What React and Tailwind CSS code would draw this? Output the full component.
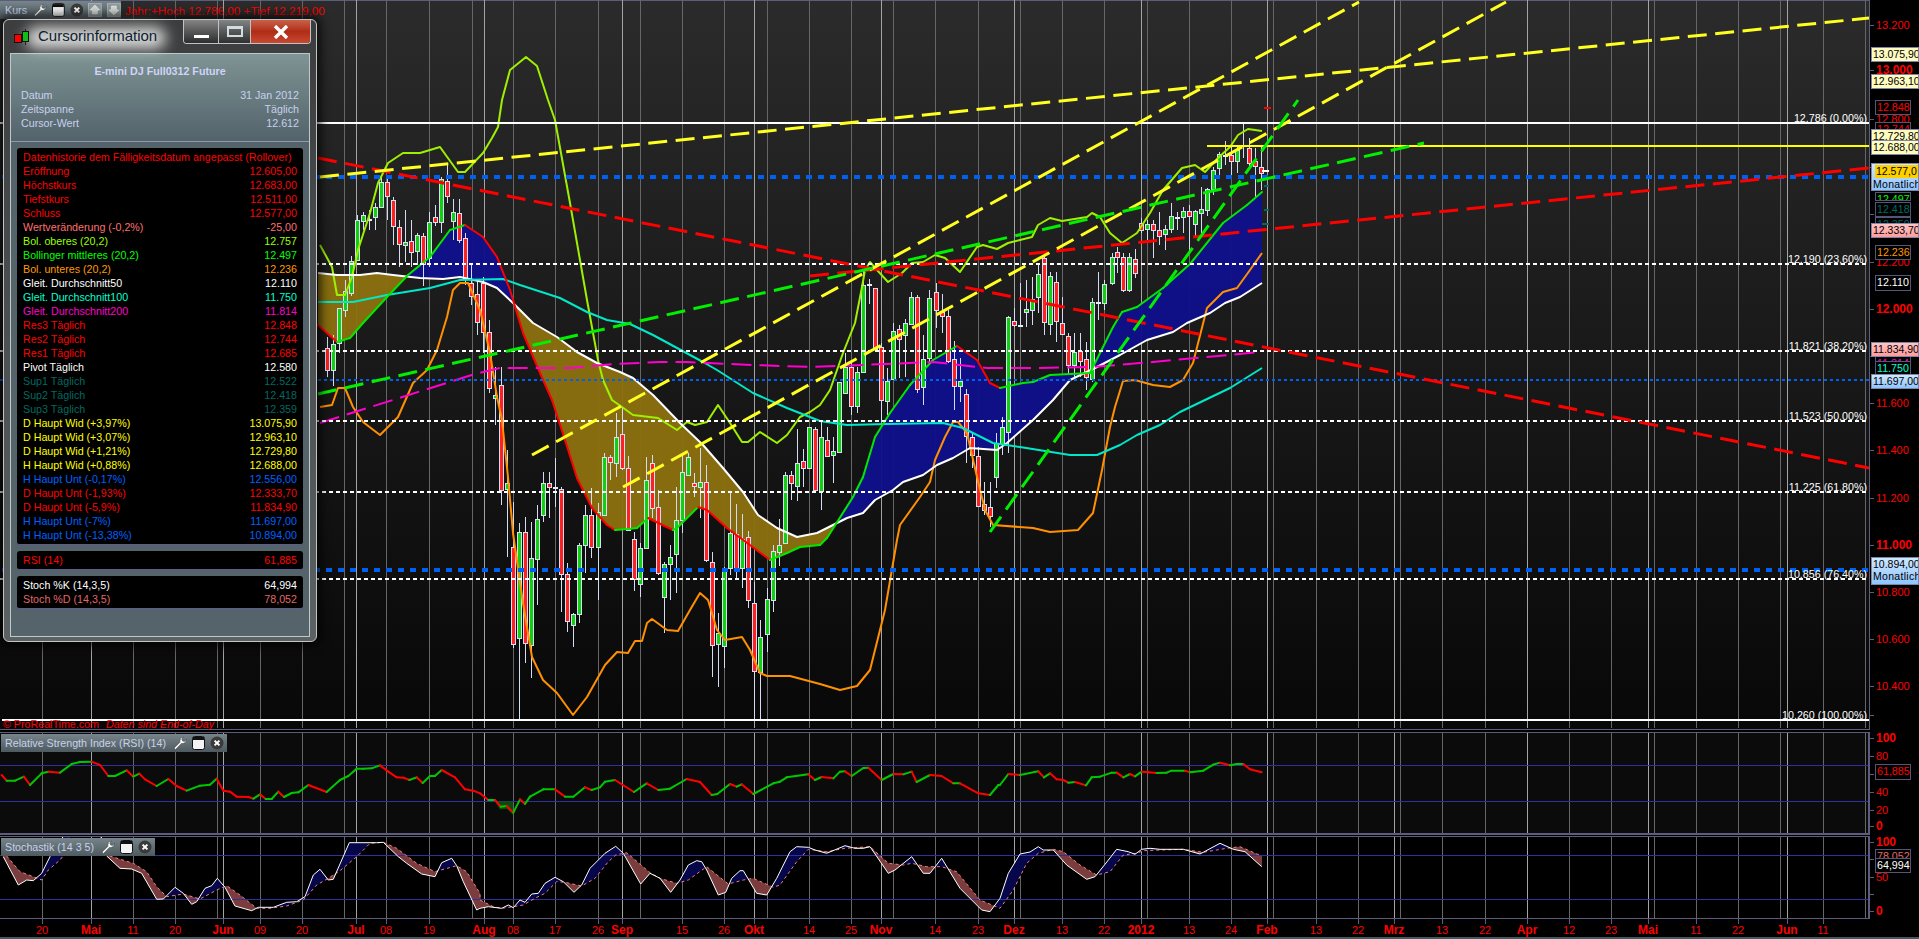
import React from "react";

const z = (x0, y0, a) => a.map(([x, y]) => [x0 + x / 3, y0 + y / 3]);
const pts = (p) => p.map(([x, y]) => `${x.toFixed(1)},${y.toFixed(1)}`).join(" ");
const at = (p, x) => {
  if (x <= p[0][0]) return p[0][1];
  for (let i = 1; i < p.length; i++) {
    if (x <= p[i][0]) {
      const [a, b] = p[i - 1];
      const [c, d] = p[i];
      return c === a ? d : b + ((d - b) * (x - a)) / (c - a);
    }
  }
  return p[p.length - 1][1];
};
const band = (a, b, x0, x1, above, below) => {
  const out = [];
  let cur = null;
  for (let x = x0; x <= x1; x++) {
    const ya = at(a, x);
    const yb = at(b, x);
    const c = ya < yb ? above : below;
    if (!cur || cur.c !== c) {
      if (cur) out.push(cur);
      cur = { c, t: [], u: [] };
    }
    cur.t.push([x, ya]);
    cur.u.push([x, yb]);
  }
  if (cur) out.push(cur);
  return out.map((r) => ({ c: r.c, p: pts([...r.t, ...r.u.reverse()]) }));
};

const GRID = [42,91,133,175,217,223,260,302,344,356,386,429,472,484,513,555,598,622,640,682,724,754,767,809,851,881,893,935,978,1014,1020,1062,1104,1141,1147,1189,1231,1267,1273,1316,1358,1394,1400,1442,1485,1527,1569,1611,1648,1654,1696,1738,1780,1787,1823,1865];
const MONTH = new Set([91,223,356,484,622,754,881,1014,1141,1267,1394,1527,1648,1787]);
const DATES = [[42,"20"],[91,"Mai",1],[133,"11"],[175,"20"],[223,"Jun",1],[260,"09"],[302,"20"],[356,"Jul",1],[386,"08"],[429,"19"],[484,"Aug",1],[513,"08"],[555,"17"],[598,"26"],[622,"Sep",1],[682,"15"],[724,"26"],[754,"Okt",1],[809,"14"],[851,"25"],[881,"Nov",1],[935,"14"],[978,"23"],[1014,"Dez",1],[1062,"13"],[1104,"22"],[1141,"2012",1],[1189,"13"],[1231,"24"],[1267,"Feb",1],[1316,"13"],[1358,"22"],[1394,"Mrz",1],[1442,"13"],[1485,"22"],[1527,"Apr",1],[1569,"12"],[1611,"23"],[1648,"Mai",1],[1696,"11"],[1738,"22"],[1787,"Jun",1],[1823,"11"]];

const BBU = [[320,245],[332,267],[337,295],[345,295],[352,277],[358,250],[370,213],[378,183],[388,163],[403,153],[420,153],[440,147],[458,172],[465,172],[483,153],[492,138],[498,127],[502,100],[510,70],[526,57],[537,66],[548,100],[555,120],[570,203],[587,300],[598,360],[603,380],[612,400],[622,407],[633,415],[658,418],[677,430],[687,422],[695,425],[707,422],[718,405],[730,423],[742,442],[748,442],[760,432],[777,443],[787,435],[800,417],[810,412],[820,405],[830,390],[843,353],[855,323],[862,287],[865,270],[870,262],[877,270],[888,282],[902,273],[912,263],[923,262],[935,255],[945,258],[960,272],[977,247],[983,245],[997,249],[1008,243],[1032,237],[1038,225],[1050,218],[1062,221],[1087,217],[1092,213],[1100,217],[1110,233],[1122,243],[1137,233],[1150,213],[1163,190],[1182,168],[1195,165],[1205,172],[1218,158],[1230,147],[1238,135],[1248,129],[1262,131]];
const MID = [[318,325],[337,342],[350,338],[363,323],[387,297],[408,275],[430,257],[450,230],[465,225],[483,237],[497,257],[510,290],[523,333],[540,373],[552,400],[565,440],[577,478],[592,508],[607,525],[615,530],[628,529],[637,528],[648,518],[673,530],[677,528],[698,507],[707,510],[727,528],[770,560],[787,553],[800,547],[820,545],[827,538],[853,497],[863,477],[875,437],[890,413],[910,385],[933,360],[957,346],[977,360],[990,383],[1000,388],[1023,383],[1033,382],[1050,375],[1090,373],[1113,327],[1122,312],[1137,307],[1163,288],[1190,264],[1223,223],[1247,205],[1262,192]];
const BBL = [[320,407],[332,405],[338,388],[345,388],[353,407],[363,422],[380,435],[398,417],[413,383],[427,370],[437,350],[447,317],[453,290],[460,283],[468,283],[480,310],[490,353],[497,397],[502,420],[508,477],[513,533],[523,603],[532,657],[543,680],[557,693],[573,715],[587,697],[605,665],[617,652],[628,653],[635,641],[642,641],[647,623],[652,619],[667,630],[678,631],[690,610],[700,593],[708,600],[717,630],[725,640],[742,637],[750,650],[760,673],[767,676],[790,676],[820,684],[840,690],[857,686],[870,670],[885,610],[897,540],[900,525],[920,497],[930,482],[935,460],[945,437],[953,422],[958,422],[967,433],[977,477],[985,510],[993,525],[1033,528],[1050,532],[1078,530],[1093,513],[1102,470],[1110,427],[1115,407],[1123,381],[1135,380],[1153,385],[1170,387],[1183,380],[1193,363],[1207,308],[1223,292],[1237,288],[1250,270],[1262,253]];
const SMA50 = [[318,273],[337,275],[360,275],[377,273],[393,275],[420,278],[443,279],[460,277],[483,282],[497,288],[513,303],[533,323],[557,337],[577,352],[597,363],[620,372],[633,378],[653,395],[680,423],[703,445],[723,468],[743,492],[758,515],[777,528],[797,537],[817,533],[847,518],[863,513],[875,500],[893,490],[903,482],[923,475],[937,465],[953,458],[970,448],[997,450],[1007,443],[1033,420],[1053,400],[1070,380],[1097,367],[1120,355],[1147,340],[1173,332],[1187,323],[1210,313],[1225,303],[1240,297],[1262,283]];
const SMA100 = [[318,302],[353,302],[387,295],[430,288],[460,280],[503,279],[520,285],[560,298],[587,312],[607,320],[630,324],[653,335],[703,362],[717,370],[753,393],[787,408],[820,421],[847,425],[887,424],[943,423],[963,428],[993,443],[1020,447],[1070,455],[1097,455],[1120,445],[1137,435],[1160,425],[1180,412],[1230,388],[1262,368]];
const SMA200 = [[320,423],[475,374],[500,368],[570,368],[615,364],[660,362],[687,362],[753,365],[812,367],[933,362],[987,368],[1033,368],[1093,367],[1153,362],[1260,352]];

const R = "r", G = "g", W = "w";
const candles = [
  ...[[20,683,750,650,770,R],[38,672,750,645,797,G],[56,565,670,565,700,G],[74,512,570,480,590,G],[92,422,518,408,528,G],[110,300,420,285,420,G],[128,285,302,275,330,G],[146,298,300,270,330,W],[164,262,292,250,330,G],[182,185,260,165,265,G],[200,187,230,165,300,R],[218,241,320,230,375,R],[236,322,373,300,440,R],[254,365,373,270,425,G],[272,362,395,300,440,R],[290,345,392,340,435,G],[308,347,430,340,498,R],[328,307,415,275,440,G],[346,292,307,255,318,R],[364,178,307,170,340,G],[382,182,227,135,250,R],[400,277,305,238,360,G],[418,278,360,237,368,R],[436,355,478,340,495,R],[454,490,530,430,555,R],[472,522,605,480,645,R],[490,490,638,470,700,R],[508,637,805,600,820,R],[526,825,835,740,915,G],[544,795,1110,740,1155,R]].map(([x,t,b,u,d,c])=>[320+x/3,120+t/3,120+b/3,120+u/3,120+d/3,c]),
  ...[[562,250,268,150,470,G],[580,440,730,305,745,R],[598,397,715,370,957,G],[616,397,730,350,790,R],[634,475,735,365,835,G],[652,358,478,315,615,G],[670,250,345,215,365,G],[688,250,262,215,355,R],[706,262,266,175,320,W],[724,268,522,262,635,R],[742,523,665,490,695,R],[760,643,675,640,740,G],[778,435,643,430,670,G],[796,346,436,315,520,G],[814,346,442,265,475,R],[835,337,442,310,600,G],[853,170,345,160,345,G],[871,172,187,165,240,R],[889,110,187,40,230,G],[907,103,205,20,210,R],[925,203,388,168,392,R],[943,416,535,395,572,R],[961,445,553,430,592,G],[979,241,445,170,448,G],[997,190,325,165,355,R],[1015,322,520,270,525,R],[1033,492,592,485,700,G],[1051,470,492,435,600,G],[1069,360,463,262,578,G],[1087,217,360,160,398,G],[1105,170,225,160,228,G],[1123,250,256,220,290,R],[1141,247,262,145,355,G],[1159,245,478,195,485,R],[1177,485,733,455,830,R],[1195,700,733,640,862,G],[1213,510,738,500,803,G],[1231,400,505,275,525,G],[1249,402,503,312,540,R],[1267,417,505,342,565,G],[1285,410,598,392,625,R],[1303,610,815,545,957,R],[1321,710,815,660,957,G],[1342,598,702,565,755,G],[1360,452,600,435,635,G],[1378,435,455,358,498,G],[1396,224,427,217,428,G],[1414,226,250,212,300,R],[1432,190,258,88,302,G],[1450,184,205,148,262,R],[1468,82,205,80,205,G],[1486,88,270,80,278,R]].map(([x,t,b,u,d,c])=>[320+x/3,400+t/3,400+b/3,400+u/3,400+d/3,c]),
  ...[[4,652,815,600,870,G],[22,660,708,620,712,R],[40,694,706,650,790,G],[58,487,697,485,700,G],[76,440,517,400,520,G],[94,440,556,430,585,R],[112,455,556,440,578,G],[130,195,455,150,460,G],[148,192,196,178,252,W],[166,203,385,203,390,R],[184,380,540,370,605,R],[202,482,543,445,585,G],[220,332,475,310,480,G],[238,328,357,315,475,R],[256,310,345,298,470,G],[274,230,310,215,315,G],[292,230,505,225,520,R],[310,418,502,345,555,G],[328,235,415,210,425,G],[349,217,270,190,325,R],[367,275,288,222,340,R],[385,287,423,270,430,R],[403,418,498,362,570,R],[421,482,496,415,545,G],[439,523,650,508,728,R],[457,650,705,640,745,R],[475,707,858,680,860,R],[493,852,870,785,885,R],[511,862,890,785,920,R],[529,670,772,640,805,G],[547,622,672,590,705,G],[565,290,636,288,700,G],[583,302,313,265,320,R],[601,314,317,190,320,W],[619,268,276,180,320,G],[637,237,270,170,315,G],[655,163,233,135,280,G],[673,115,307,112,345,R],[691,167,312,155,345,G],[709,187,305,155,365,R],[727,308,340,230,345,R],[745,347,435,340,465,R],[763,395,435,340,470,G],[781,394,423,340,470,R],[799,416,470,365,510,R],[817,245,475,235,485,G],[835,247,250,155,300,W],[853,193,250,180,270,G]].map(([x,t,b,u,d,c])=>[820+x/3,220+t/3,220+b/3,220+u/3,220+d/3,c]),
  ...[[455,502,580,490,585,G],[472,487,502,470,550,R],[490,502,600,490,605,R],[508,502,600,490,605,G],[526,508,550,477,565,R],[544,398,418,385,430,R],[562,402,418,390,450,G],[580,403,422,390,505,R],[598,421,440,365,465,R],[616,418,433,405,480,G],[634,378,418,340,430,G],[652,380,382,365,420,W],[670,364,382,350,430,G],[688,364,380,345,490,R],[706,364,403,360,445,G],[724,358,371,290,430,G],[742,298,362,295,378,G],[760,240,298,232,315,G],[778,193,235,185,255,G],[796,196,200,153,225,W],[814,196,215,165,255,R],[832,180,212,165,250,G],[850,165,172,100,205,W],[868,175,220,145,235,R],[886,212,228,175,320,R],[904,230,247,170,300,R]].map(([x,t,b,u,d,c])=>[960+x/3,90+t/3,90+b/3,90+u/3,90+d/3,c]),
];

const RSI = [
  ...z(0,700,[[5,225],[20,242],[45,242],[72,230],[90,255],[125,220],[145,215],[180,218],[215,192],[240,186],[275,185],[300,195],[325,228],[345,228],[380,211],[400,230],[418,221],[435,238],[470,258],[505,237],[530,258],[560,272],[600,257],[630,254],[650,236],[670,272],[690,275],[710,290],[745,291],[760,296],[780,283],[797,297],[815,297],[835,275],[852,291],[875,279],[895,277],[925,255],[980,276],[1020,240],[1045,228],[1070,206],[1090,206],[1115,205],[1140,196],[1165,215],[1190,232],[1210,233],[1228,240],[1250,232],[1268,249],[1290,228],[1305,228],[1325,210],[1365,232],[1395,268],[1420,272]]),
  ...z(480,730,[[0,190],[25,210],[45,210],[62,230],[80,228],[100,248],[120,208],[135,222],[150,200],[190,178],[225,178],[255,200],[280,200],[315,172],[335,180],[360,172],[375,155],[405,150],[462,186],[500,160],[535,180],[570,176],[620,147],[660,156],[695,195],[712,192],[750,162],[770,170],[785,163],[820,192],[880,160],[900,155],[920,142],[985,133],[1005,150],[1025,141],[1060,145],[1080,125],[1095,124],[1115,138],[1150,114],[1165,113],[1205,150],[1240,132],[1270,133],[1295,125],[1310,156],[1350,135],[1385,138],[1420,160],[1440,160],[1495,190],[1530,195],[1555,165]]),
  ...z(1000,730,[[0,165],[25,132],[60,135],[115,124],[132,142],[150,130],[170,148],[190,150],[205,158],[225,156],[258,166],[275,142],[300,140],[335,128],[350,128],[370,142],[390,132],[405,139],[425,125],[445,127],[470,129],[500,128],[515,122],[555,122],[570,127],[610,122],[640,104],[660,98],[690,106],[710,102],[730,102],[750,118],[785,127]]),
];
const K = [
  ...z(0,700,[[10,470],[55,555],[80,540],[100,542],[125,520],[150,470],[165,435],[200,400],[300,400],[320,468],[360,505],[395,507],[425,520],[470,598],[490,597],[525,562],[550,580],[575,613],[590,605],[615,565],[635,557],[652,535],[675,562],[705,618],[755,632],[775,622],[820,622],[860,607],[890,605],[915,590],[940,525],[960,508],[985,540],[1000,538],[1048,428],[1130,428],[1150,427],[1195,470],[1220,490],[1265,522],[1305,530],[1325,488],[1355,475],[1370,497],[1390,545],[1430,630]]),
  ...z(480,730,[[0,535],[25,530],[65,535],[85,525],[100,533],[120,510],[135,517],[155,492],[175,490],[195,460],[225,442],[250,455],[282,487],[305,465],[330,415],[375,370],[407,349],[430,370],[482,462],[510,430],[540,445],[572,487],[600,450],[625,405],[650,392],[665,395],[680,420],[715,495],[737,487],[755,445],[780,422],[790,422],[830,490],[860,495],[890,445],[930,365],[950,350],[985,352],[1005,360],[1040,370],[1095,347],[1125,355],[1150,355],[1170,350],[1225,430],[1245,420],[1295,380],[1330,430],[1350,430],[1385,385],[1440,475],[1505,540],[1530,545],[1560,505]]),
  ...z(1000,730,[[25,430],[60,372],[90,366],[115,350],[130,360],[160,360],[200,405],[260,448],[285,440],[315,403],[350,358],[385,365],[405,373],[425,358],[450,355],[480,358],[550,358],[600,372],[660,340],[700,358],[735,365],[785,410]]),
];
const D = [
  ...z(0,700,[[20,468],[60,515],[100,530],[125,540],[145,510],[180,480],[195,460],[210,400],[300,400],[320,465],[400,490],[440,515],[470,560],[500,590],[550,582],[600,597],[650,570],[680,557],[720,585],[770,625],[810,625],[860,618],[910,600],[950,555],[985,535],[1020,512],[1070,470],[1110,430],[1150,427],[1190,445],[1250,490],[1305,515],[1370,497],[1400,515],[1440,580]]),
  ...z(480,730,[[0,510],[40,530],[65,535],[100,530],[130,525],[165,505],[195,490],[230,455],[255,457],[305,468],[345,445],[385,395],[407,375],[440,368],[510,428],[540,445],[590,460],[625,450],[680,410],[745,462],[790,450],[820,445],[880,472],[900,465],[950,395],[985,358],[1040,365],[1095,355],[1170,350],[1225,400],[1270,405],[1295,400],[1340,410],[1385,410],[1430,425],[1500,510],[1560,535]]),
  ...z(1000,730,[[40,480],[80,400],[115,370],[160,358],[190,365],[240,405],[290,435],[330,425],[370,375],[410,370],[430,362],[480,360],[550,358],[610,367],[680,355],[720,350],[785,378]]),
];

const ROWS = [
  ["Eröffnung","12.605,00","text-[#ff0000]"],["Höchstkurs","12.683,00","text-[#ff0000]"],["Tiefstkurs","12.511,00","text-[#ff0000]"],["Schluss","12.577,00","text-[#ff0000]"],
  ["Wertveränderung (-0,2%)","-25,00","text-[#ff7070]"],["Bol. oberes (20,2)","12.757","text-[#99ff00]"],["Bollinger mittleres (20,2)","12.497","text-[#00ff00]"],["Bol. unteres (20,2)","12.236","text-[#ff9900]"],
  ["Gleit. Durchschnitt50","12.110","text-white"],["Gleit. Durchschnitt100","11.750","text-[#00ffd0]"],["Gleit. Durchschnitt200","11.814","text-[#ff00cc]"],
  ["Res3 Täglich","12.848","text-[#ff0000]"],["Res2 Täglich","12.744","text-[#ff0000]"],["Res1 Täglich","12.685","text-[#ff0000]"],["Pivot Täglich","12.580","text-white"],
  ["Sup1 Täglich","12.522","text-[#006a60]"],["Sup2 Täglich","12.418","text-[#006a60]"],["Sup3 Täglich","12.359","text-[#006a60]"],
  ["D Haupt Wid (+3,97%)","13.075,90","text-[#ffff00]"],["D Haupt Wid (+3,07%)","12.963,10","text-[#ffff00]"],["D Haupt Wid (+1,21%)","12.729,80","text-[#ffff00]"],["H Haupt Wid (+0,88%)","12.688,00","text-[#ffff00]"],
  ["H Haupt Unt (-0,17%)","12.556,00","text-[#0060ff]"],["D Haupt Unt (-1,93%)","12.333,70","text-[#ff0000]"],["D Haupt Unt (-5,9%)","11.834,90","text-[#ff0000]"],["H Haupt Unt (-7%)","11.697,00","text-[#0060ff]"],["H Haupt Unt (-13,38%)","10.894,00","text-[#0060ff]"],
];

const FIBS = [[123,"12.786 (0,00%)"],[264,"12.190 (23,60%)"],[351,"11.821 (38,20%)"],[421,"11.523 (50,00%)"],[492,"11.225 (61,80%)"],[579,"10.856 (76,40%)"],[720,"10.260 (100,00%)"]];

const Row = ({ l, v, c }) => (
  <div className={`flex justify-between h-[14px] leading-[14px] whitespace-nowrap ${c}`}>
    <span>{l}</span>
    <span>{v}</span>
  </div>
);

const Wrench = () => (
  <svg width="14" height="14" viewBox="0 0 14 14"><path d="M1 12.2 7 6.2C6.4 4 7.6 1.4 10.6 1.1L8.8 3.1 9.6 5 11.5 5.4 13.2 3.4C13.4 6 11 8.1 8.4 7.4L2.6 13.4Z" fill="#fff" stroke="#333" strokeWidth=".5" /></svg>
);
const Win = () => (
  <svg width="13" height="14" viewBox="0 0 13 14"><rect x=".5" y=".5" width="12" height="13" rx="2" fill="#f4f4f4" stroke="#111" /><rect x="1" y="1" width="11" height="3" fill="#111" /></svg>
);
const Close = () => (
  <svg width="14" height="14" viewBox="0 0 14 14"><circle cx="7" cy="7" r="6.5" fill="#3a3a3a" /><path d="M4.6 4.6 9.4 9.4M9.4 4.6 4.6 9.4" stroke="#fff" strokeWidth="2" /></svg>
);
const DocArrow = ({ up }) => (
  <svg width="14" height="14" viewBox="0 0 14 14"><rect x=".5" y=".5" width="13" height="13" fill="#8c979b" stroke="#a8b0b0" /><path d={up ? "M7 2 12 7H9.5V11H4.5V7H2Z" : "M7 12 12 7H9.5V3H4.5V7H2Z"} fill="#d4d8d4" stroke="#f0f0f0" strokeWidth=".6" /></svg>
);

const PanelTag = ({ children }) => (
  <div className="absolute left-[1px] top-[1px] h-[18px] flex items-center gap-[5px] pl-[4px] pr-[3px] bg-gradient-to-b from-[#76858a] to-[#4e5a60] text-[#c8d0ea] text-[10.7px] whitespace-nowrap">
    <span className="mr-[2px]">{children}</span>
    <Wrench />
    <Win />
    <Close />
  </div>
);

const Grid = ({ h }) => (
  <g shapeRendering="crispEdges">
    {GRID.map((x) => (
      <line key={x} x1={x + 0.5} x2={x + 0.5} y1="0" y2={h} stroke={MONTH.has(x) ? "#a4a4a4" : "#666666"} strokeWidth="1" />
    ))}
  </g>
);

const Tick = ({ y, t, bold }) => (
  <>
    <div className="absolute left-0 w-[4px] h-[1px] bg-[#5c5c7c]" style={{ top: y }} />
    {t && (
      <div className={`absolute left-[6px] leading-[14px] h-[14px] text-[#ff0000] whitespace-nowrap ${bold ? "font-bold text-[12px]" : "text-[11px]"}`} style={{ top: y - 7 }}>{t}</div>
    )}
  </>
);

const LightTag = ({ y, v, c, sub, h }) => (
  <div className={`absolute left-[1px] w-[48px] overflow-hidden border border-[#7e86a8] text-black text-[10.5px] pl-[1px] leading-[12px] whitespace-nowrap ${c}`} style={{ top: y, height: h || 15 }}>
    {v}
    {sub && <div className="tracking-[0.3px]">{sub}</div>}
  </div>
);
const BoxTag = ({ y, v, c, h }) => (
  <div className={`absolute left-[5px] w-[36px] overflow-hidden border border-[#55557a] bg-black text-[10.7px] pl-[1px] leading-[13px] whitespace-nowrap ${c}`} style={{ top: y, height: h || 15 }}>{v}</div>
);

const yellow = "bg-[#fffcc0]", pink = "bg-gradient-to-b from-[#ffc4c4] to-[#ff9c9c]", sky = "bg-gradient-to-b from-[#cfe8ff] to-[#8fc4ff]";

export default function App() {
  const cloud = band(MID, SMA50, 318, 1262, "#10108a", "#8a700f");
  const sto = band(K, D, 3, 1262, "#06064a", "#7a3c3c");
  const dash = { strokeDasharray: "19 8.5", fill: "none", strokeWidth: 3 };
  const T = (p, c, o) => <polyline points={pts(p)} fill="none" stroke={c} strokeWidth="2" strokeLinejoin="round" {...o} />;

  return (
    <div className="w-[1919px] h-[939px] bg-black relative overflow-hidden font-['Liberation_Sans',Arial,sans-serif] text-[10.7px] flex flex-col">
      {/* MAIN PANEL */}
      <div className="flex h-[730px] shrink-0">
        <div className="relative w-[1870px] h-[730px] border-t border-b border-r border-[#5c5c7c] bg-gradient-to-b from-[#2b2b2b] to-[#080808]">
          <svg width="1869" height="728" className="absolute left-0 -top-px block">
            <Grid h={730} />
            {cloud.map((r, i) => <polygon key={i} points={r.p} fill={r.c} opacity=".97" />)}
            {candles.map(([x, t, b, u, d, c], i) => {
              const cx = Math.round(x) + 0.5;
              return (
                <g key={i} shapeRendering="crispEdges">
                  <line x1={cx} x2={cx} y1={u} y2={d} stroke="#d4dcf4" />
                  {c === W ? (
                    <rect x={cx - 2.5} y={t} width="5" height="2" fill="#e8ecf8" />
                  ) : (
                    <rect x={cx - 2} y={Math.round(t) + 0.5} width="4" height={Math.max(3, Math.round(b - t))} fill={c === R ? "#ff2020" : "#10d010"} stroke="#d8def4" />
                  )}
                </g>
              );
            })}
            {T(BBU, "#9ff000")}
            {T(BBL, "#ff9000")}
            {T(SMA50, "#ffffff")}
            {T(SMA100, "#00e8c8")}
            {MID.slice(1).map((p, i) => (
              <line key={i} x1={MID[i][0]} y1={MID[i][1]} x2={p[0]} y2={p[1]} stroke={p[1] > MID[i][1] ? "#ff0000" : "#00e800"} strokeWidth="2" strokeLinecap="round" />
            ))}
            {T(SMA200, "#ff00cc", { strokeDasharray: "20 8", strokeWidth: 2 })}
            <g shapeRendering="crispEdges">
              <line x1="0" x2="1869" y1="123" y2="123" stroke="#fff" strokeWidth="2" />
              <line x1="1207" x2="1869" y1="146" y2="146" stroke="#ffff00" strokeWidth="2" />
              {[264, 351, 421, 492, 579].map((y) => (
                <line key={y} x1="0" x2="1869" y1={y} y2={y} stroke="#fff" strokeWidth="2" strokeDasharray="4 3" />
              ))}
              <line x1="0" x2="1869" y1="380" y2="380" stroke="#0060f0" strokeWidth="2" strokeDasharray="3 3" />
              <line x1="2" x2="1869" y1="177" y2="177" stroke="#0060f0" strokeWidth="4" strokeDasharray="6 6" />
              <line x1="2" x2="1869" y1="570" y2="570" stroke="#0060f0" strokeWidth="4" strokeDasharray="6 6" />
              <line x1="2" x2="1869" y1="720" y2="720" stroke="#fff" strokeWidth="2" />
              <rect x="1264" y="107" width="7" height="2" fill="#ff0000" />
              <rect x="1262" y="170" width="7" height="2" fill="#fff" />
              <rect x="1264" y="185" width="5" height="2" fill="#006a60" />
              <rect x="1264" y="209" width="5" height="2" fill="#006a60" />
              <rect x="1262" y="223" width="7" height="2" fill="#006a60" />
            </g>
            <line x1="318" y1="158" x2="1869" y2="468" stroke="#ff0000" style={dash} />
            <line x1="810" y1="276" x2="1869" y2="168" stroke="#ff0000" style={dash} />
            <line x1="320" y1="177" x2="1869" y2="18" stroke="#ffff20" style={dash} />
            <line x1="532" y1="455" x2="1359" y2="2" stroke="#ffff20" style={dash} />
            <line x1="623" y1="487" x2="1506" y2="2" stroke="#ffff20" style={dash} />
            <line x1="318" y1="394" x2="1424" y2="143" stroke="#00f000" style={dash} />
            <line x1="990" y1="532" x2="1298" y2="100" stroke="#00f000" style={dash} />
          </svg>

          {FIBS.map(([y, t]) => (
            <div key={y} className="absolute right-[2px] h-[13px] leading-[13px] text-white text-[10.7px] whitespace-nowrap" style={{ top: y - 12 }}>{t}</div>
          ))}

          <div className="absolute left-0 top-0 h-[18px] w-[121px] flex items-center gap-[5px] pl-[5px] bg-gradient-to-b from-[#76858a] to-[#4e5a60] text-[#c8d0ea] text-[10.7px]">
            <span className="mr-[1px]">Kurs</span>
            <Wrench />
            <Win />
            <Close />
            <DocArrow up />
            <DocArrow />
          </div>
          <div className="absolute left-[125px] top-[3px] h-[14px] leading-[14px] text-[#ff0000] text-[11.7px] whitespace-nowrap">Jahr:+Hoch 12.786,00 +Tief 12.219,00</div>
          <div className="absolute left-[3px] top-[716px] h-[14px] leading-[14px] text-[#ff0000] text-[10.7px] whitespace-nowrap">
            © ProRealTime.com<span className="italic ml-[7px]">Daten sind End-of-Day</span>
          </div>

          {/* Cursor window */}
          <div className="absolute left-[3px] top-[18px] w-[314px] h-[623px] rounded-[6px] border border-[#c4c4c4] bg-gradient-to-b from-[#3c3d3e] via-[#4b5052] to-[#5a6264] shadow-[0_0_10px_4px_rgba(0,0,0,0.7)] flex flex-col">
            <div className="relative h-[33px] shrink-0 flex items-center pl-[10px] gap-[7px]">
              <div className="absolute left-[22px] top-[7px] w-[140px] h-[22px] rounded-full bg-[#d8d8d8] blur-[7px]" />
              <svg width="17" height="16" viewBox="0 0 17 16" className="relative">
                <path d="M11.5 0V16" stroke="#222" />
                <rect x=".5" y="5.5" width="7" height="8" fill="#ff0000" stroke="#111" />
                <rect x="8.5" y="2.5" width="6" height="10" fill="#10c010" stroke="#111" />
              </svg>
              <span className="relative text-[15px] text-[#0c2230] whitespace-nowrap">Cursorinformation</span>
              <div className="absolute right-[5px] top-0 h-[24px] w-[128px] flex rounded-b-[4px] border border-t-0 border-[#c0c4c8] overflow-hidden">
                <div className="w-[35px] border-r border-[#c0c4c8] bg-gradient-to-b from-[#858585] to-[#2e2e2e] flex items-center justify-center pt-[9px]">
                  <div className="w-[15px] h-[3px] bg-white" />
                </div>
                <div className="w-[32px] border-r border-[#c0c4c8] bg-gradient-to-b from-[#808585] to-[#303030] flex items-center justify-center">
                  <div className="w-[16px] h-[11px] border-[2px] border-t-[3px] border-[#d4dce0]" />
                </div>
                <div className="flex-1 bg-gradient-to-b from-[#c86048] via-[#b02c14] to-[#c84830] flex items-center justify-center">
                  <svg width="16" height="14" viewBox="0 0 16 14"><path d="M2 1 14 13M14 1 2 13" stroke="#fff" strokeWidth="3.4" /></svg>
                </div>
              </div>
            </div>
            <div className="mx-[6px] h-[584px] border border-[#c0c8c8] bg-[#55646a] flex flex-col">
              <div className="h-[88px] shrink-0 border-b border-[#8f96b8] bg-gradient-to-b from-[#7f9494] to-[#52636a] px-[10px] text-[#c8d0f0]">
                <div className="h-[14px] mt-[10px] leading-[14px] text-center font-bold text-[#d0d4f8]">E-mini DJ Full0312 Future</div>
                <div className="mt-[10px] flex justify-between h-[14px] leading-[14px]"><span>Datum</span><span>31 Jan 2012</span></div>
                <div className="flex justify-between h-[14px] leading-[14px]"><span>Zeitspanne</span><span>Täglich</span></div>
                <div className="flex justify-between h-[14px] leading-[14px]"><span>Cursor-Wert</span><span>12.612</span></div>
              </div>
              <div className="mx-[6px] mt-[6px] rounded-[3px] bg-black border-b border-[#5c5c90] px-[6px] pt-[2px] pb-[2px]">
                <div className="h-[14px] leading-[14px] text-[#ff0000] whitespace-nowrap">Datenhistorie dem Fälligkeitsdatum angepasst (Rollover)</div>
                {ROWS.map(([l, v, c]) => <Row key={l + v} l={l} v={v} c={c} />)}
              </div>
              <div className="mx-[6px] mt-[6px] rounded-[3px] bg-black border-b border-[#5c5c90] px-[6px] py-[2px]">
                <Row l="RSI (14)" v="61,885" c="text-[#ff0000]" />
              </div>
              <div className="mx-[6px] mt-[6px] rounded-[3px] bg-black border-b border-[#5c5c90] px-[6px] py-[2px]">
                <Row l="Stoch %K (14,3,5)" v="64,994" c="text-white" />
                <Row l="Stoch %D (14,3,5)" v="78,052" c="text-[#e06868]" />
              </div>
            </div>
          </div>
        </div>
        <div className="relative flex-1 h-[730px] overflow-hidden">
          {[[25,"13.200"],[70,"13.000",1],[119,"12.800"],[167],[214],[262,"12.200"],[309,"12.000",1],[356],[403,"11.600"],[450,"11.400"],[498,"11.200"],[545,"11.000",1],[592,"10.800"],[639,"10.600"],[686,"10.400"],[715]].map(([y, t, b]) => (
            <Tick key={y} y={y} t={t} bold={b} />
          ))}
          <BoxTag y={100} v="12.848" c="text-[#ff0000]" />
          <BoxTag y={122} v="12.744" c="text-[#ff0000]" />
          <BoxTag y={192} v="12.497" c="text-[#00ff00]" h={9} />
          <BoxTag y={202} v="12.418" c="text-[#006a60]" />
          <BoxTag y={217} v="12.359" c="text-[#006a60]" h={7} />
          <BoxTag y={245} v="12.236" c="text-[#ff9900]" />
          <BoxTag y={275} v="12.110" c="text-white" h={16} />
          <BoxTag y={356} v="11.814" c="text-[#ff00cc]" h={6} />
          <BoxTag y={361} v="11.750" c="text-[#00ffd0]" />
          <LightTag y={47} v="13.075,90" c={yellow} />
          <LightTag y={74} v="12.963,10" c={yellow} />
          <LightTag y={129} v="12.729,80" c={yellow} h={12} />
          <LightTag y={140} v="12.688,00" c={yellow} />
          <LightTag y={223} v="12.333,70" c={pink} />
          <LightTag y={342} v="11.834,90" c={pink} />
          <LightTag y={374} v="11.697,00" c={sky} />
          <LightTag y={557} v="10.894,00" sub="Monatlich" c={sky} h={28} />
          <div className="absolute left-[1px] top-[163px] w-[48px] h-[28px] border border-[#7e86a8] bg-gradient-to-b from-[#cfe8ff] to-[#8fc4ff] overflow-hidden whitespace-nowrap text-black text-[10.5px]">
            <div className="ml-[3px] mt-[1px] h-[13px] leading-[13px] bg-[#ffd000] pl-[1px]">12.577,0</div>
            <div className="pl-[1px] leading-[12px] tracking-[0.3px]">Monatlich</div>
          </div>
        </div>
      </div>

      {/* RSI */}
      <div className="flex h-[103px] mt-[2px] shrink-0">
        <div className="relative w-[1870px] h-[103px] border-t border-b-2 border-r-2 border-[#5c5c7c] bg-[#0b0b0b]">
          <svg width="1868" height="100" className="absolute left-0 top-0 block">
            <Grid h={100} />
            <g shapeRendering="crispEdges">
              <line x1="0" x2="1868" y1="32.5" y2="32.5" stroke="#3030a0" />
              <line x1="0" x2="1868" y1="68.5" y2="68.5" stroke="#3030a0" />
            </g>
            <polygon points="495,68.5 513,68.5 513,82 507,76 500,76.5" fill="#0a4a0a" />
            {RSI.slice(1).map((p, i) => (
              <line key={i} x1={RSI[i][0]} y1={RSI[i][1] - 733} x2={p[0]} y2={p[1] - 733} stroke={p[1] > RSI[i][1] ? "#ff0000" : "#00c800"} strokeWidth="2" strokeLinecap="round" />
            ))}
          </svg>
          <PanelTag>Relative Strength Index (RSI) (14)</PanelTag>
        </div>
        <div className="relative flex-1 overflow-hidden">
          {[[6,"100",1],[24,"80"],[42],[60,"40"],[78,"20"],[94,"0",1]].map(([y, t, b]) => <Tick key={y} y={y} t={t} bold={b} />)}
          <BoxTag y={32} v="61,885" c="text-[#ff0000]" h={16} />
        </div>
      </div>

      {/* Stoch */}
      <div className="flex h-[83px] mt-[1px] shrink-0">
        <div className="relative w-[1870px] h-[83px] border-t border-b border-r-2 border-[#5c5c7c] bg-black">
          <svg width="1868" height="81" className="absolute left-0 top-0 block">
            <Grid h={81} />
            {sto.map((r, i) => <polygon key={i} points={r.p} fill={r.c} transform="translate(0,-837)" />)}
            <g shapeRendering="crispEdges">
              <line x1="0" x2="1868" y1="18.5" y2="18.5" stroke="#3030a0" />
              <line x1="0" x2="1868" y1="62.5" y2="62.5" stroke="#3030a0" />
            </g>
            <polyline points={pts(D.map(([x, y]) => [x, y - 837]))} fill="none" stroke="#f08080" strokeWidth="1" strokeDasharray="3 3" />
            <polyline points={pts(K.map(([x, y]) => [x, y - 837]))} fill="none" stroke="#fff" strokeWidth="1" />
          </svg>
          <PanelTag>Stochastik (14 3 5)</PanelTag>
        </div>
        <div className="relative flex-1 overflow-hidden">
          {[[6,"100",1],[23],[41,"50"],[58],[75,"0",1]].map(([y, t, b]) => <Tick key={y} y={y} t={t} bold={b} />)}
          <BoxTag y={13} v="78,052" c="text-[#e06868]" h={10} />
          <BoxTag y={22} v="64,994" c="text-white" h={15} />
        </div>
      </div>

      {/* Date axis */}
      <div className="relative h-[19px] shrink-0">
        <svg width="1870" height="19" className="absolute left-0 top-0 block" fontFamily="'Liberation Sans',Arial,sans-serif">
          {GRID.filter((x) => DATES.some((d) => d[0] === x)).map((x) => (
            <line key={x} x1={x + 0.5} x2={x + 0.5} y1="0" y2="5" stroke="#5c5c7c" shapeRendering="crispEdges" />
          ))}
          {DATES.map(([x, t, b]) => (
            <text key={x} x={x} y="15" textAnchor="middle" fill="#ff0000" fontSize={b ? 12 : 11} fontWeight={b ? 700 : 400}>{t}</text>
          ))}
        </svg>
      </div>
      <div className="absolute left-0 right-0 bottom-0 h-[2px] bg-[#3e5c60]" />
    </div>
  );
}
